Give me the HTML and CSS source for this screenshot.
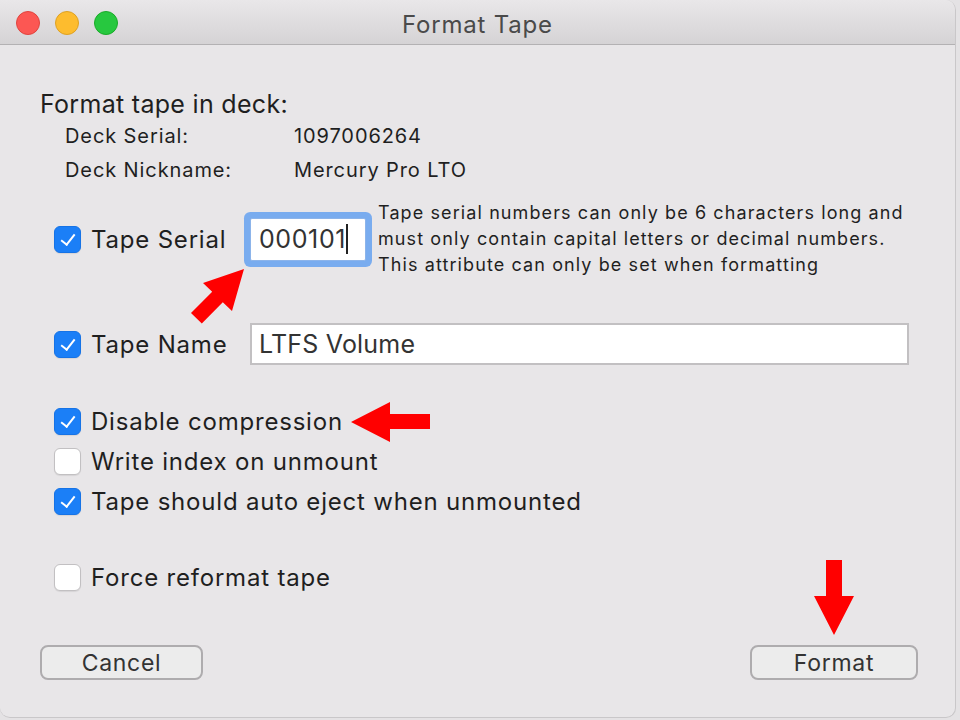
FILE: index.html
```html
<!DOCTYPE html>
<html lang="en">
<head>
    <meta charset="UTF-8">
    <meta name="viewport" content="width=device-width, initial-scale=1.0">
    <title>Format Tape</title>
    <link rel="stylesheet" href="styles.css">
</head>
<body>

    <div class="window">
        <div class="titlebar">
            <div class="lights">
                <span class="light red"></span>
                <span class="light yellow"></span>
                <span class="light green"></span>
            </div>
            <div class="title">Format Tape</div>
            <div></div>
        </div>

        <div class="content">
            <h1 class="heading">Format tape in deck:</h1>
            <div class="deck-info">
                <div class="deck-row"><span class="deck-label">Deck Serial:</span><span>1097006264</span></div>
                <div class="deck-row"><span class="deck-label">Deck Nickname:</span><span>Mercury Pro LTO</span></div>
            </div>

            <div class="serial-row">
                <label class="check-label">
                    <span class="checkbox checked"></span>Tape Serial
                </label>
                <div class="field field-serial">000101<span class="caret"></span></div>
                <p class="help">Tape serial numbers can only be 6 characters long and<br>must only contain capital letters or decimal numbers.<br>This attribute can only be set when formatting</p>
            </div>

            <div class="name-row">
                <label class="check-label">
                    <span class="checkbox checked"></span>Tape Name
                </label>
                <div class="field field-name">LTFS Volume</div>
            </div>

            <div class="options">
                <label class="option"><span class="checkbox checked"></span>Disable compression</label>
                <label class="option"><span class="checkbox"></span>Write index on unmount</label>
                <label class="option"><span class="checkbox checked"></span>Tape should auto eject when unmounted</label>
            </div>

            <div class="options force">
                <label class="option"><span class="checkbox"></span>Force reformat tape</label>
            </div>

            <div class="buttons">
                <button class="btn btn-cancel">Cancel</button>
                <button class="btn btn-format">Format</button>
            </div>
        </div>

        <!-- red annotation arrows drawn over the dialog -->
        <svg class="arrows" width="960" height="720" viewBox="0 0 960 720">
            <polygon points="244,269 232,311 222.8,302.2 201.8,323.6 191,313 212.2,291.8 203,283"/>
            <polygon points="351,422 390,402 390,414 430,414 430,429 390,429 390,442"/>
            <polygon points="826,560 842,560 842,596 854,596 834,635 814,596 826,596"/>
        </svg>
    </div>

</body>
</html>
```

FILE: styles.css
```css
body {
    margin: 0;
    background: #e4e2e4;
    font-family: Inter, "Liberation Sans", sans-serif;
    color: #1f1f1f;
}

.window {
    position: relative;
    width: 955px;
    height: 717px;
    background: #e8e6e8;
    border-right: 1px solid #c9c7c9;
    border-bottom: 1px solid #c9c7c9;
    border-radius: 0 10px 10px 10px;
    overflow: hidden;
}

.titlebar {
    display: grid;
    grid-template-columns: 1fr auto 1fr;
    align-items: center;
    height: 44px;
    background: linear-gradient(to bottom, #e9e7e9, #d5d3d5);
    border-bottom: 1px solid #b3b1b3;
}

.lights {
    display: flex;
    gap: 15px;
    padding-left: 16px;
    padding-top: 1px;
}

.light {
    width: 24px;
    height: 24px;
    border-radius: 50%;
    box-sizing: border-box;
}

.light.red {
    background: #fc5753;
    border: 1px solid #e0443e;
}

.light.yellow {
    background: #fdbc2e;
    border: 1px solid #dea123;
}

.light.green {
    background: #27c83f;
    border: 1px solid #1aab29;
}

.title {
    font-size: 24px;
    letter-spacing: 0.8px;
    color: #4a4a4a;
    padding-top: 5px;
}

.content {
    padding: 46px 37px 0 40px;
}

.heading {
    margin: 0;
    font-size: 25px;
    letter-spacing: 0.3px;
    font-weight: normal;
    line-height: 26px;
}

.deck-info {
    margin-top: 2px;
    padding-left: 25px;
}

.deck-row {
    display: flex;
    font-size: 20px;
    letter-spacing: 0.9px;
    line-height: 34px;
}

.deck-label {
    width: 229px;
}

.check-label, .option {
    display: flex;
    align-items: center;
    gap: 10px;
    font-size: 24px;
    letter-spacing: 0.8px;
}

.check-label {
    width: 210px;
    padding-left: 14px;
    box-sizing: border-box;
}

.checkbox {
    width: 27px;
    height: 27px;
    box-sizing: border-box;
    border-radius: 6px;
    background: #fff;
    border: 1px solid #c2c0c2;
    box-shadow: 0 1px 1px rgba(0, 0, 0, 0.08);
    position: relative;
    flex-shrink: 0;
}

.checkbox.checked {
    background: #1b7ff7;
    border-color: #1673e6;
}

.checkbox.checked::after {
    content: "";
    position: absolute;
    left: 9px;
    top: 4px;
    width: 6px;
    height: 12px;
    border-right: 2.5px solid #fff;
    border-bottom: 2.5px solid #fff;
    transform: rotate(38deg);
}

.serial-row {
    display: flex;
    align-items: center;
    margin-top: 13px;
}

.field {
    background: #fff;
    font-size: 25px;
    color: #333;
    box-sizing: border-box;
    padding-left: 8px;
    display: flex;
    align-items: center;
}

.field-serial {
    width: 116px;
    height: 43px;
    border: 1px solid #8cb4ea;
    box-shadow: 0 0 0 6px #79acef;
    border-radius: 2px;
    letter-spacing: 0.6px;
}

.caret {
    display: inline-block;
    width: 2px;
    height: 30px;
    background: #222;
    margin-left: 0;
}

.help {
    margin: 0 0 0 12px;
    font-size: 18px;
    letter-spacing: 1.1px;
    line-height: 26px;
}

.name-row {
    display: flex;
    align-items: center;
    margin-top: 45px;
}

.field-name {
    width: 659px;
    height: 42px;
    border: 2px solid #c2c0c2;
    padding-left: 7px;
    letter-spacing: 0.2px;
}

.options {
    margin-top: 36px;
    padding-left: 14px;
}

.option {
    height: 40px;
}

.buttons {
    display: flex;
    justify-content: space-between;
    margin-top: 48px;
}

.btn {
    height: 35px;
    border: 2px solid #aeacae;
    border-radius: 8px;
    background: #ececec;
    font-family: Inter, "Liberation Sans", sans-serif;
    font-size: 23px;
    letter-spacing: 0.7px;
    color: #333;
    padding: 0;
}

.btn-cancel {
    width: 163px;
}

.btn-format {
    width: 168px;
}

.arrows {
    position: absolute;
    left: 0;
    top: 0;
    pointer-events: none;
}

.arrows polygon {
    fill: #ff0000;
}
```
